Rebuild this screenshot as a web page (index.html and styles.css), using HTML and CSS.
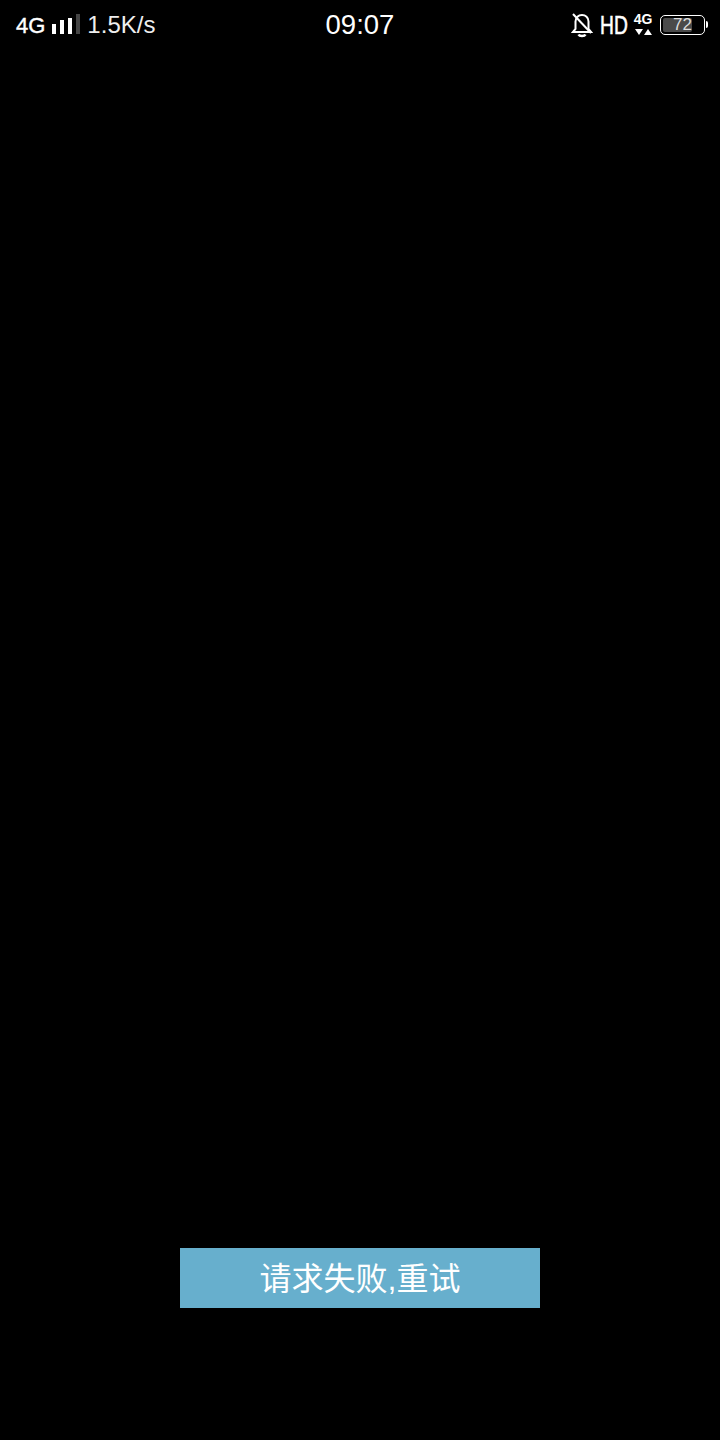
FILE: index.html
```html
<!DOCTYPE html>
<html lang="zh-CN">
<head>
    <meta charset="UTF-8">
    <meta name="viewport" content="width=device-width, initial-scale=1.0">
    <title>请求失败</title>
    <link rel="stylesheet" href="styles.css">
</head>
<body>
    <div class="screen">
        <div class="status-bar">
            <div class="status-left">
                <span class="network">4G</span>
                <span class="signal">
                    <i class="bar bar-1"></i>
                    <i class="bar bar-2"></i>
                    <i class="bar bar-3"></i>
                    <i class="bar bar-4"></i>
                </span>
                <span class="speed">1.5K/s</span>
            </div>
            <div class="clock">09:07</div>
            <div class="status-right">
                <svg class="bell" width="22" height="26" viewBox="0 0 22 26" fill="none" stroke="#fff" stroke-width="2">
                    <path d="M2 20h18l-2.500-3V9.500C17.500 5.500 14.500 3 11 3S4.500 5.500 4.500 9.500V17z"/>
                    <path d="M7.500 22.500c1 2 6 2 7 0" stroke-width="2.500"/>
                    <path d="M2 2l18 19"/>
                </svg>
                <span class="hd">HD</span>
                <span class="data">
                    <span class="data-label">4G</span>
                    <span class="arrows">
                        <i class="arrow-down"></i>
                        <i class="arrow-up"></i>
                    </span>
                </span>
                <span class="battery">
                    <span class="battery-body">
                        <span class="battery-level"></span>
                        <span class="battery-text">72</span>
                    </span>
                    <span class="battery-cap"></span>
                </span>
            </div>
        </div>
        <div class="content">
            <button class="retry-btn">请求失败,重试</button>
        </div>
    </div>
</body>
</html>
```

FILE: styles.css
```css
* {
    box-sizing: border-box;
}

body {
    margin: 0;
    background: #000;
    color: #fff;
    font-family: "Liberation Sans", "Noto Sans CJK SC", sans-serif;
}

.screen {
    display: flex;
    flex-direction: column;
    height: 1440px;
}

.status-bar {
    display: grid;
    grid-template-columns: 1fr auto 1fr;
    align-items: center;
    height: 50px;
    padding: 0 11px;
}

.status-left {
    display: flex;
    align-items: center;
}

.network {
    font-size: 22px;
    margin-left: 5px;
    margin-top: 2px;
    -webkit-text-stroke: 0.4px #fff;
}

.signal {
    display: flex;
    align-items: flex-end;
    gap: 4px;
    height: 20px;
    margin-left: 7px;
    margin-top: -2px;
}

.bar {
    display: block;
    width: 4px;
    background: #fff;
}

.bar-1 { height: 10px; }
.bar-2 { height: 14px; }
.bar-3 { height: 16px; }
.bar-4 { height: 20px; background: #444; }

.speed {
    font-size: 24px;
    margin-left: 7px;
    color: #eee;
}

.clock {
    font-size: 27.500px;
    line-height: 50px;
}

.status-right {
    display: flex;
    align-items: center;
    justify-content: flex-end;
}

.bell {
    margin-right: 7px;
}

.hd {
    font-size: 26px;
    transform: scaleX(0.74);
    transform-origin: left center;
    margin-right: -4px;
    -webkit-text-stroke: 0.6px #fff;
}

.data {
    display: flex;
    flex-direction: column;
    align-items: center;
    width: 18px;
    margin-top: -3px;
    margin-right: 9px;
}

.data-label {
    font-size: 14px;
    font-weight: 700;
    line-height: 14px;
}

.arrows {
    display: flex;
    gap: 1px;
    margin-top: 3px;
}

.arrow-down {
    border-left: 4px solid transparent;
    border-right: 4px solid transparent;
    border-top: 6px solid #fff;
}

.arrow-up {
    border-left: 4px solid transparent;
    border-right: 4px solid transparent;
    border-bottom: 6px solid #fff;
}

.battery {
    display: flex;
    align-items: center;
    margin-top: -1px;
    margin-left: -1px;
    margin-right: 1px;
}

.battery-body {
    position: relative;
    display: block;
    width: 45px;
    height: 20px;
    padding: 2px;
    border: 1.500px solid #fff;
    border-radius: 5px;
}

.battery-level {
    display: block;
    width: 74%;
    height: 100%;
    background: #4a4a4a;
    border-radius: 2px;
}

.battery-text {
    position: absolute;
    inset: 0;
    font-size: 17px;
    line-height: 17px;
    text-align: center;
    color: #ddd;
}

.battery-cap {
    width: 2px;
    height: 7px;
    margin-left: 1px;
    background: #fff;
    border-radius: 0 2px 2px 0;
}

.content {
    flex: 1;
    display: flex;
    flex-direction: column;
    align-items: center;
    justify-content: flex-end;
    padding-bottom: 132px;
}

.retry-btn {
    width: 360px;
    height: 60px;
    border: none;
    padding: 0 0 5px;
    background: #67afcd;
    color: #fff;
    font-family: "Liberation Sans", "Noto Sans CJK SC", sans-serif;
    font-size: 32px;
}
```
